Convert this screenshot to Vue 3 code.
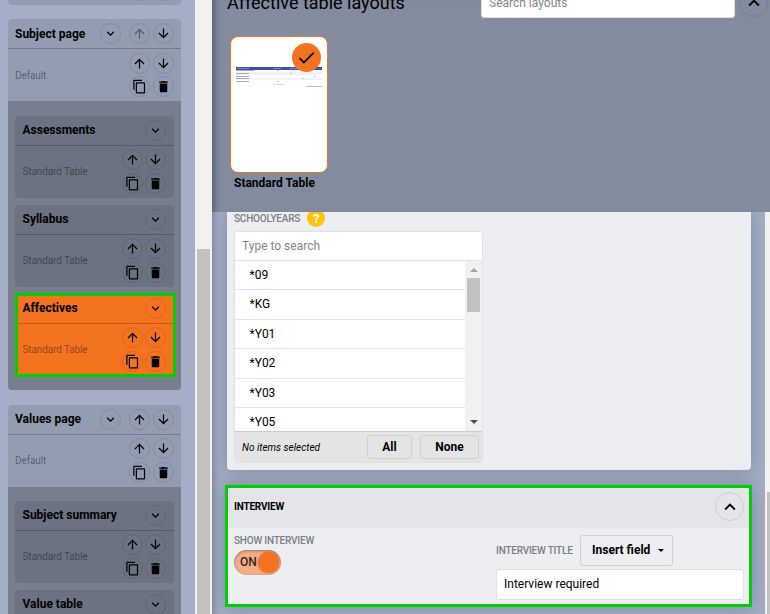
<template>
  <div class="app">
    <aside class="sidebar">
      <div class="page-card cut-card">
        <span class="round"></span>
        <span class="round"></span>
      </div>

      <section v-for="page in pages" :key="page.title" class="page-card" :class="{ first: page.first }">
        <header class="card-head">
          <h3>{{ page.title }}</h3>
          <button class="round head-toggle"><svg viewBox="0 0 24 24"><path :d="icons.expand" /></svg></button>
          <button class="round" :class="{ disabled: page.first }"><svg viewBox="0 0 24 24"><path :d="icons.up" /></svg></button>
          <button class="round"><svg viewBox="0 0 24 24"><path :d="icons.down" /></svg></button>
        </header>
        <div class="card-body">
          <span class="layout-name">Default</span>
          <div class="tools">
            <button v-for="name in tools" :key="name" class="round"><svg viewBox="0 0 24 24"><path :d="icons[name]" /></svg></button>
          </div>
        </div>
        <div class="children">
          <article v-for="item in page.items" :key="item" class="child" :class="{ active: item === selected }">
            <header class="card-head">
              <h3>{{ item }}</h3>
              <button class="round"><svg viewBox="0 0 24 24"><path :d="icons.expand" /></svg></button>
            </header>
            <div class="card-body">
              <span class="layout-name">Standard Table</span>
              <div class="tools">
                <button v-for="name in tools" :key="name" class="round"><svg viewBox="0 0 24 24"><path :d="icons[name]" /></svg></button>
              </div>
            </div>
          </article>
        </div>
      </section>
    </aside>

    <div class="side-scroll"><div class="side-thumb"></div></div>

    <main class="main">
      <section class="layouts">
        <div class="layouts-head">
          <h2>Affective table layouts</h2>
          <input class="layout-search" type="text" placeholder="Search layouts" />
          <button class="round big"><svg viewBox="0 0 24 24"><path :d="icons.collapse" /></svg></button>
        </div>
        <div class="thumb">
          <div class="sheet">
            <div class="sheet-head"><i></i><i></i><i></i></div>
            <div v-for="n in 5" :key="n" class="sheet-row"><i></i><b></b></div>
            <div class="sheet-foot"><i></i><b></b></div>
          </div>
          <span class="badge"><svg viewBox="0 0 24 24"><path :d="icons.check" /></svg></span>
        </div>
        <p class="thumb-label">Standard Table</p>
      </section>

      <div class="settings">
        <div class="settings-content">
          <section class="panel years">
            <div class="field-label">SCHOOLYEARS <span class="help">?</span></div>
            <div class="picker">
              <input class="picker-search" type="text" placeholder="Type to search" />
              <div class="picker-list">
                <ul>
                  <li v-for="year in years" :key="year">{{ year }}</li>
                </ul>
                <div class="list-scroll">
                  <span class="arrow-up"></span>
                  <span class="list-thumb"></span>
                  <span class="arrow-down"></span>
                </div>
              </div>
              <footer class="picker-foot">
                <em>No items selected</em>
                <button class="btn all">All</button>
                <button class="btn none">None</button>
              </footer>
            </div>
          </section>

          <section class="panel interview">
            <header class="interview-head">
              <h4>INTERVIEW</h4>
              <button class="round big"><svg viewBox="0 0 24 24"><path :d="icons.collapse" /></svg></button>
            </header>
            <div class="interview-body">
              <div class="show-col">
                <div class="field-label">SHOW INTERVIEW</div>
                <button class="switch"><span>ON</span><i></i></button>
              </div>
              <div class="title-col">
                <div class="title-row">
                  <span class="field-label">INTERVIEW TITLE</span>
                  <button class="btn insert">Insert field <i class="caret"></i></button>
                </div>
                <input v-model="interviewTitle" class="title-input" type="text" />
              </div>
            </div>
          </section>
        </div>
        <div class="main-scroll"><div class="main-thumb"></div></div>
      </div>
    </main>
  </div>
</template>

<script setup>
import { ref } from 'vue'

const icons = {
  up: 'M4 12l1.41 1.41L11 7.83V20h2V7.83l5.58 5.59L20 12l-8-8-8 8z',
  down: 'M20 12l-1.41-1.41L13 16.17V4h-2v12.17l-5.58-5.59L4 12l8 8 8-8z',
  expand: 'M16.59 8.59L12 13.17 7.41 8.59 6 10l6 6 6-6z',
  collapse: 'M12 8l-6 6 1.41 1.41L12 10.83l4.59 4.58L18 14z',
  copy: 'M16 1H4c-1.1 0-2 .9-2 2v14h2V3h12V1zm3 4H8c-1.1 0-2 .9-2 2v14c0 1.1.9 2 2 2h11c1.1 0 2-.9 2-2V7c0-1.1-.9-2-2-2zm0 16H8V7h11v14z',
  trash: 'M6 19c0 1.1.9 2 2 2h8c1.1 0 2-.9 2-2V7H6v12zM19 4h-3.5l-1-1h-5l-1 1H5v2h14V4z',
  check: 'M9 16.17L4.83 12l-1.42 1.41L9 19 21 7l-1.41-1.41z',
}
const tools = ['up', 'down', 'copy', 'trash']

const pages = [
  { title: 'Subject page', first: true, items: ['Assessments', 'Syllabus', 'Affectives'] },
  { title: 'Values page', first: false, items: ['Subject summary', 'Value table'] },
]
const selected = ref('Affectives')
const years = ['*09', '*KG', '*Y01', '*Y02', '*Y03', '*Y05']
const interviewTitle = ref('Interview required')
</script>

<style>
body {
  margin: 0;
  overflow: hidden;
}
</style>

<style scoped>
* {
  box-sizing: border-box;
}

.app {
  display: flex;
  width: 770px;
  height: 614px;
  overflow: hidden;
  font-family: Roboto, "Liberation Sans", sans-serif;
  font-size: 12px;
  color: #000;
}

h2,
h3,
h4,
p,
ul {
  margin: 0;
  padding: 0;
}

button,
input {
  font-family: inherit;
  margin: 0;
  outline: none;
}

/* round icon buttons */
.round {
  flex: none;
  display: flex;
  align-items: center;
  justify-content: center;
  width: 21px;
  height: 21px;
  padding: 0;
  border: 1px solid rgba(0, 0, 0, 0.1);
  border-radius: 50%;
  background: none;
}
.round svg {
  flex: none;
  width: 15px;
  height: 15px;
}
.round.disabled svg {
  opacity: 0.4;
}
.round.big {
  width: 29px;
  height: 29px;
}
.round.big svg {
  width: 22px;
  height: 22px;
}

/* sidebar */
.sidebar {
  flex: none;
  width: 195px;
  height: 614px;
  padding: 0 14px 0 8px;
  overflow: hidden;
  background: #a4aec6;
}
.page-card {
  margin-bottom: 15px;
  border-radius: 4px;
  background: #939db1;
  overflow: hidden;
}
.cut-card {
  display: flex;
  align-items: flex-end;
  justify-content: flex-end;
  gap: 2px;
  height: 5px;
  margin-bottom: 14px;
  padding: 0 7px 4px 0;
  border-radius: 0 0 4px 4px;
}
.card-head {
  display: flex;
  align-items: center;
  gap: 2.5px;
  height: 30px;
  padding: 0 7.5px 0 7px;
  border-bottom: 1px solid #747c8c;
}
.card-head h3 {
  flex: 1;
  font-size: 12px;
  font-weight: 700;
  line-height: 14px;
  white-space: nowrap;
}
.head-toggle {
  margin-right: 5.5px;
}
.card-body {
  display: flex;
  align-items: center;
  justify-content: space-between;
  height: 52px;
  padding: 0 7.5px 0 7px;
}
.layout-name {
  font-size: 10px;
  letter-spacing: -0.12px;
  color: rgba(0, 0, 0, 0.42);
}
.tools {
  display: grid;
  grid-template-columns: 21px 21px;
  gap: 2.5px;
}
.children {
  padding: 14px 7px;
  background: #787e8d;
}
.first .children {
  padding-top: 14.5px;
}
.child {
  height: 82px;
  margin-bottom: 7px;
  border-radius: 4px;
  background: #6b7281;
}
.child .card-head,
.child .card-body {
  padding: 0 8px 0 7.5px;
}
.child:last-child {
  margin-bottom: 0;
}
.child .card-head {
  border-bottom-color: #545b6b;
}
.child.active {
  margin: 0 -1px 0 1px;
  background: #f47321;
  outline: 3px solid #00d000;
  outline-offset: -2px;
  border-radius: 0;
}
.child.active .card-head,
.child.active .card-body {
  padding: 0 9px 0 6.5px;
}
.child.active .card-head {
  border-bottom-color: #c05a1b;
}

.side-scroll {
  flex: none;
  width: 17px;
  padding: 249px 2px 0;
  background: #f1f1f1;
}
.side-thumb {
  height: 365px;
  background: #c1c1c1;
}

/* layout chooser */
.main {
  flex: 1;
  display: flex;
  flex-direction: column;
  min-width: 0;
}
.layouts {
  display: flex;
  flex-direction: column;
  flex: none;
  height: 212px;
  padding-left: 15px;
  overflow: hidden;
  background: #838b9e;
  box-shadow: inset 9px 0 8px -8px rgba(0, 0, 0, 0.45);
}
.layouts-head {
  flex: none;
  display: flex;
  align-items: center;
  height: 29px;
  margin-top: -12px;
  padding-right: 2px;
}
.layouts-head h2 {
  width: 254px;
  font-size: 18px;
  font-weight: 400;
  line-height: 22px;
  white-space: nowrap;
}
.layout-search {
  width: 254px;
  height: 31px;
  margin-right: 4px;
  padding: 0 7px;
  border: 1px solid #e1e1e1;
  border-radius: 3px;
  background: #fff;
  font-size: 12px;
}
.layout-search::placeholder,
.picker-search::placeholder {
  color: #858585;
  opacity: 1;
}
.thumb {
  position: relative;
  flex: none;
  width: 98px;
  height: 137px;
  margin: 19px 0 0 3px;
  padding: 29.5px 5px 0;
  border: 1px solid #f47321;
  border-radius: 8px;
  background: #fff;
}
.badge {
  position: absolute;
  top: 6px;
  right: 6px;
  display: flex;
  align-items: center;
  justify-content: center;
  width: 29px;
  height: 29px;
  border-radius: 50%;
  background: #f47321;
}
.badge svg {
  width: 21px;
  height: 21px;
}
.sheet-head {
  display: flex;
  align-items: center;
  gap: 9px;
  height: 3px;
  padding-left: 1px;
  background: #3e4fb5;
}
.sheet-head i {
  width: 8px;
  height: 1px;
  background: #7683cb;
}
.sheet-head i:first-child {
  width: 12px;
  margin-right: 15px;
}
.sheet-row {
  display: flex;
  align-items: center;
  height: 2.7px;
}
.sheet-row:nth-child(odd) {
  background: #eff0f8;
}
.sheet-row i {
  width: 13px;
  height: 1px;
  background: #a9aab4;
}
.sheet-row b {
  width: 2px;
  height: 1px;
  margin-left: 28px;
  background: #c9cad6;
}
.sheet-row:nth-child(2) i {
  width: 18px;
}
.sheet-row:nth-child(2) b {
  margin-left: 23px;
}
.sheet-row:nth-child(3) b {
  margin-left: 41px;
}
.sheet-row:nth-child(4) b {
  margin-left: 65px;
}
.sheet-row:nth-child(5) b {
  margin-left: 53px;
}
.sheet-foot {
  display: flex;
  justify-content: space-between;
  padding-left: 37px;
}
.sheet-foot i {
  width: 12px;
  height: 1px;
  margin-top: 1px;
  background: #dcdcdc;
}
.sheet-foot b {
  width: 16px;
  height: 1px;
  margin-top: 3px;
  background: #bbb;
}
.thumb-label {
  margin: 3px 0 0 7px;
  font-size: 12px;
  font-weight: 700;
  line-height: 14px;
}

/* settings */
.settings {
  display: flex;
  flex: 1;
  min-height: 0;
  background: #a4aec6;
}
.settings-content {
  flex: 1;
  padding: 0 13px 0 13px;
  overflow: hidden;
  box-shadow: inset 9px 0 8px -8px rgba(0, 0, 0, 0.3);
}
.panel {
  background: #edeef2;
  box-shadow: 0 0 18px rgba(80, 95, 110, 0.45);
}
.years {
  height: 258px;
  margin: 0 1px 15px 2px;
  padding: 0 7px;
  border-radius: 0 0 4px 4px;
}
.field-label {
  font-size: 10px;
  font-weight: 500;
  letter-spacing: -0.2px;
  color: #7b7d82;
  white-space: nowrap;
}
.years .field-label {
  display: flex;
  align-items: center;
  gap: 7px;
  height: 19px;
  padding-bottom: 7px;
}
.help {
  display: flex;
  align-items: center;
  justify-content: center;
  width: 18px;
  height: 18px;
  border-radius: 50%;
  background: #ffc20e;
  color: #fff;
  font-size: 13px;
  font-weight: 700;
}
.picker {
  display: flex;
  flex-direction: column;
  width: 249px;
  height: 232px;
  border: 1px solid #e1e1e1;
  border-radius: 3px;
  background: #fff;
  overflow: hidden;
}
.picker-search {
  flex: none;
  height: 29px;
  padding: 0 7px;
  border: none;
  border-bottom: 1px solid #e1e1e1;
  background: #fff;
  font-size: 12px;
}
.picker-list {
  display: flex;
  height: 170px;
  overflow: hidden;
}
.picker-list ul {
  flex: 1;
  list-style: none;
}
.picker-list li {
  height: 29.4px;
  padding-left: 14.5px;
  border-bottom: 1px solid #e4e4e4;
  line-height: 28px;
}
.list-scroll {
  display: flex;
  flex-direction: column;
  align-items: center;
  width: 17px;
  padding: 7px 2px;
  background: #f1f1f1;
}
.arrow-up {
  border: 4px solid transparent;
  border-top: none;
  border-bottom-color: #a3a3a3;
}
.list-thumb {
  width: 13px;
  height: 34px;
  margin-top: 6px;
  background: #c1c1c1;
}
.arrow-down {
  margin-top: auto;
  border: 4px solid transparent;
  border-bottom: none;
  border-top-color: #505050;
}
.picker-foot {
  flex: 1;
  display: flex;
  align-items: center;
  padding: 0 3px 0 7px;
  border-top: 1px solid #ccc;
  background: #e4e4e4;
}
.picker-foot em {
  flex: 1;
  font-size: 10px;
}
.btn {
  height: 24px;
  padding: 0;
  border: 1px solid #cfd0d2;
  border-radius: 3px;
  background: none;
  color: #000;
  font-size: 12px;
  font-weight: 700;
}
.all {
  width: 45px;
  margin-right: 8px;
}
.none {
  width: 59px;
}

.interview {
  height: 122px;
  border: 3px solid #00d000;
}
.interview-head {
  display: flex;
  align-items: center;
  justify-content: space-between;
  height: 40px;
  padding: 0 5px 3px 6px;
  background: #e4e5e9;
}
.interview-head h4 {
  font-size: 10px;
  font-weight: 700;
  letter-spacing: -0.2px;
}
.interview-body {
  display: flex;
  justify-content: space-between;
  padding: 7px 5px 0 6px;
}
.show-col .field-label {
  height: 15px;
  line-height: 12px;
}
.switch {
  display: flex;
  align-items: center;
  justify-content: space-between;
  width: 47px;
  height: 25px;
  padding: 0 2px 0 6px;
  border: none;
  border-radius: 13px;
  background: #f3ad88;
  box-shadow: inset 0 1px 3px rgba(0, 0, 0, 0.35);
  color: #33241b;
  font-size: 12px;
  font-weight: 500;
}
.switch span {
  padding-bottom: 1px;
}
.switch i {
  width: 21px;
  height: 21px;
  border-radius: 50%;
  background: #f47321;
  box-shadow: 0 0 2px rgba(160, 60, 0, 0.6);
}
.title-col {
  width: 248px;
}
.title-row {
  display: flex;
  align-items: center;
  height: 31px;
  margin-bottom: 3px;
}
.title-row .field-label {
  width: 84px;
}
.insert {
  display: flex;
  align-items: center;
  justify-content: space-between;
  width: 93px;
  height: 31px;
  padding: 0 8px 1px 11px;
}
.caret {
  border: 3px solid transparent;
  border-bottom: none;
  border-top-color: #000;
}
.title-input {
  display: block;
  width: 248px;
  height: 31px;
  padding: 0 7px 1px;
  border: 1px solid #e1e1e1;
  border-radius: 3px;
  background: #fff;
  color: #000;
  font-size: 12px;
}

.main-scroll {
  flex: none;
  width: 5px;
  padding: 280px 0 0 2px;
  background: #f1f1f1;
}
.main-thumb {
  height: 122px;
  background: #c1c1c1;
}
</style>
